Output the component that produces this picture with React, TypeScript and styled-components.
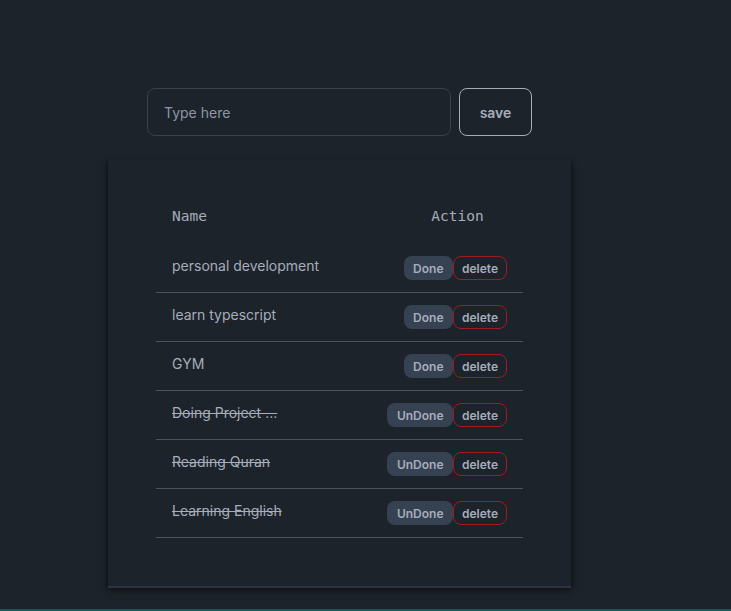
import React from "react";
import styled, { createGlobalStyle } from "styled-components";

const Global = createGlobalStyle`
  html, body { margin: 0; padding: 0; background: #1d232a; }
  body { font-family: Inter, "Noto Sans", sans-serif; color: #a6adbb; }
`;

const Page = styled.div`
  min-height: 611px;
  display: flex;
  flex-direction: column;
  padding-top: 88px;
  padding-left: 108px;
  box-sizing: border-box;
`;

const Form = styled.form`
  display: flex;
  gap: 8px;
  margin-left: 39px;
`;

const Input = styled.input`
  width: 304px;
  height: 48px;
  box-sizing: border-box;
  border-radius: 8px;
  border: 1px solid #3a4149;
  background: #1d232a;
  color: #a6adbb;
  padding: 0 16px;
  font-family: Inter, sans-serif;
  font-size: 14px;
  outline: none;
  &::placeholder { color: #8c96a6; }
`;

const SaveButton = styled.button`
  width: 73px;
  height: 48px;
  border-radius: 8px;
  border: 1px solid #a6adbb;
  background: transparent;
  color: #a6adbb;
  font-family: Inter, sans-serif;
  font-weight: 600;
  font-size: 14px;
`;

const Card = styled.div`
  width: 463px;
  margin-top: 23px;
  box-sizing: border-box;
  padding: 29px 48px 48px;
  background: #1d232a;
  box-shadow: 0 2px 0 #2c3442, 0 5px 8px rgba(0, 0, 0, 0.4), -2px 2px 3px rgba(0,0,0,0.2), 2px 2px 3px rgba(0,0,0,0.2);
`;

const HeadRow = styled.div`
  display: flex;
  justify-content: space-between;
  align-items: center;
  height: 56px;
  padding: 0 16px;
  font-family: "DejaVu Sans Mono", monospace;
  font-size: 14.5px;
  color: #a6adbb;
`;

const ActionHead = styled.span`
  width: 99px;
  text-align: center;
`;

const Row = styled.div`
  display: flex;
  justify-content: space-between;
  align-items: center;
  height: 48px;
  padding: 0 16px;
  border-bottom: 1px solid #4a525e;
  font-size: 14px;
`;

const Title = styled.span<{ $done: boolean }>`
  text-decoration: ${(p) => (p.$done ? "line-through" : "none")};
  margin-top: -6px;
`;

const Actions = styled.div`
  display: flex;
  align-items: center;
`;

const ToggleButton = styled.button`
  height: 24px;
  padding: 0 9.5px;
  border: none;
  border-radius: 8px;
  background: #364152;
  color: #a6adbb;
  font-family: Inter, sans-serif;
  font-weight: 600;
  font-size: 12px;
`;

const DeleteButton = styled.button`
  height: 24px;
  width: 54px;
  border: 1px solid #a31b1b;
  border-radius: 8px;
  background: transparent;
  color: #a6adbb;
  font-family: Inter, sans-serif;
  font-weight: 600;
  font-size: 12px;
`;

const Footer = styled.div`
  margin-top: auto;
  margin-left: -108px;
  height: 2px;
  background: #17595b;
`;

const todos = [
  { title: "personal development", done: false },
  { title: "learn typescript", done: false },
  { title: "GYM", done: false },
  { title: "Doing Project ...", done: true },
  { title: "Reading Quran", done: true },
  { title: "Learning English", done: true },
];

export default function App() {
  return (
    <>
      <Global />
      <Page>
        <Form onSubmit={(e) => e.preventDefault()}>
          <Input placeholder="Type here" />
          <SaveButton type="submit">save</SaveButton>
        </Form>
        <Card>
          <HeadRow>
            <span>Name</span>
            <ActionHead>Action</ActionHead>
          </HeadRow>
          {todos.map((t) => (
            <Row key={t.title}>
              <Title $done={t.done}>{t.title}</Title>
              <Actions>
                <ToggleButton>{t.done ? "UnDone" : "Done"}</ToggleButton>
                <DeleteButton>delete</DeleteButton>
              </Actions>
            </Row>
          ))}
        </Card>
        <Footer />
      </Page>
    </>
  );
}
